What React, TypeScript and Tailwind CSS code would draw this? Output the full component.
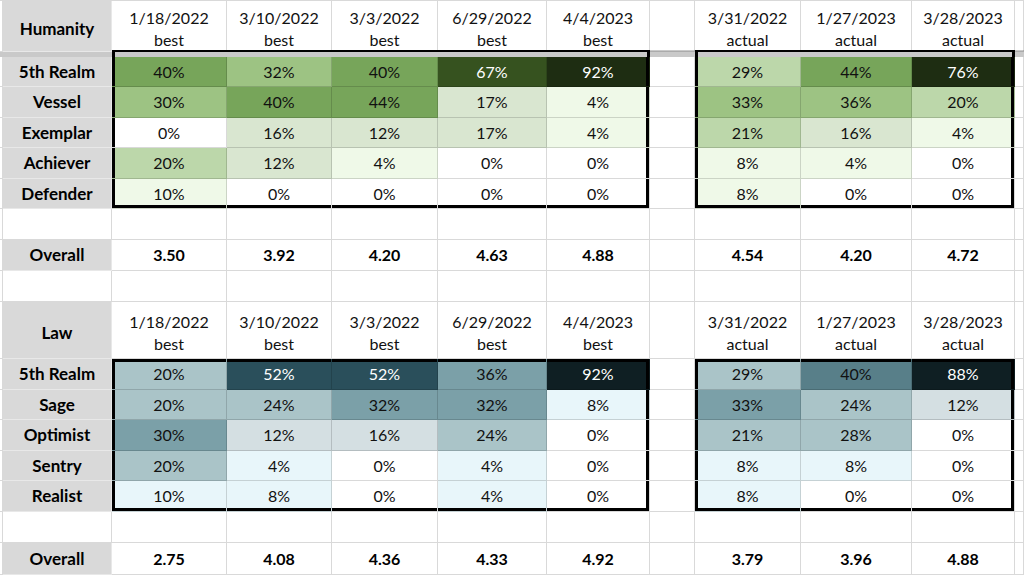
import React from 'react';

// column template shared by every row of the sheet
const GRID =
  'grid grid-cols-[3px_109px_115px_105px_106px_109px_103px_45px_106px_111px_103px_1fr]';
const CELL = 'flex items-center justify-center border-r border-b border-[#00000026]';
const LABEL =
  'flex items-center justify-center border-r border-b border-[#e8e8e8] bg-[#d9d9d9] font-bold text-[17px] text-black';

const bg: Record<string, string> = {
  g5: 'bg-[#1e2d12] text-white',
  g4: 'bg-[#36521f] text-white',
  g3: 'bg-[#77a55a]',
  g2: 'bg-[#9dc383]',
  g1: 'bg-[#bcd7aa]',
  gp: 'bg-[#d9e6d0]',
  g0: 'bg-[#eff9e8]',
  t5: 'bg-[#0f1f23] text-white',
  t4: 'bg-[#2a4f5b] text-white',
  t3b: 'bg-[#587f89]',
  t3: 'bg-[#7ba0a8]',
  t2: 'bg-[#aac4c8]',
  t1: 'bg-[#d4dfe2]',
  t0: 'bg-[#e8f6fa]',
  w: 'bg-white',
};

type Cell = [string, string];
type Line = { label: string; a: Cell[]; b: Cell[] };

const humanity: Line[] = [
  { label: '5th Realm', a: [['40%', 'g3'], ['32%', 'g2'], ['40%', 'g3'], ['67%', 'g4'], ['92%', 'g5']], b: [['29%', 'g1'], ['44%', 'g3'], ['76%', 'g5']] },
  { label: 'Vessel', a: [['30%', 'g2'], ['40%', 'g3'], ['44%', 'g3'], ['17%', 'gp'], ['4%', 'g0']], b: [['33%', 'g2'], ['36%', 'g2'], ['20%', 'g1']] },
  { label: 'Exemplar', a: [['0%', 'w'], ['16%', 'gp'], ['12%', 'gp'], ['17%', 'gp'], ['4%', 'g0']], b: [['21%', 'g1'], ['16%', 'gp'], ['4%', 'g0']] },
  { label: 'Achiever', a: [['20%', 'g1'], ['12%', 'gp'], ['4%', 'g0'], ['0%', 'w'], ['0%', 'w']], b: [['8%', 'g0'], ['4%', 'g0'], ['0%', 'w']] },
  { label: 'Defender', a: [['10%', 'g0'], ['0%', 'w'], ['0%', 'w'], ['0%', 'w'], ['0%', 'w']], b: [['8%', 'g0'], ['0%', 'w'], ['0%', 'w']] },
];

const law: Line[] = [
  { label: '5th Realm', a: [['20%', 't2'], ['52%', 't4'], ['52%', 't4'], ['36%', 't3'], ['92%', 't5']], b: [['29%', 't2'], ['40%', 't3b'], ['88%', 't5']] },
  { label: 'Sage', a: [['20%', 't2'], ['24%', 't2'], ['32%', 't3'], ['32%', 't3'], ['8%', 't0']], b: [['33%', 't3'], ['24%', 't2'], ['12%', 't1']] },
  { label: 'Optimist', a: [['30%', 't3'], ['12%', 't1'], ['16%', 't1'], ['24%', 't2'], ['0%', 'w']], b: [['21%', 't2'], ['28%', 't2'], ['0%', 'w']] },
  { label: 'Sentry', a: [['20%', 't2'], ['4%', 't0'], ['0%', 'w'], ['4%', 't0'], ['0%', 'w']], b: [['8%', 't0'], ['8%', 't0'], ['0%', 'w']] },
  { label: 'Realist', a: [['10%', 't0'], ['8%', 't0'], ['0%', 'w'], ['4%', 't0'], ['0%', 'w']], b: [['8%', 't0'], ['0%', 'w'], ['0%', 'w']] },
];

const heads = ['1/18/2022', '3/10/2022', '3/3/2022', '6/29/2022', '4/4/2023'];
const heads2 = ['3/31/2022', '1/27/2023', '3/28/2023'];

// black frame around each block, drawn with inset shadows on the edge cells
function edge(i: number, n: number, top: boolean, bottom: boolean) {
  const first = i === 0;
  const last = i === n - 1;
  if (top) {
    if (first) return 'shadow-[inset_3px_3px_0_#000]';
    if (last) return 'shadow-[inset_-3px_3px_0_#000]';
    return 'shadow-[inset_0_3px_0_#000]';
  }
  if (bottom) {
    if (first) return 'shadow-[inset_3px_-3px_0_#000]';
    if (last) return 'shadow-[inset_-3px_-3px_0_#000]';
    return 'shadow-[inset_0_-3px_0_#000]';
  }
  if (first) return 'shadow-[inset_3px_0_0_#000]';
  if (last) return 'shadow-[inset_-3px_0_0_#000]';
  return '';
}

function bandEdge(i: number, n: number) {
  if (i === 0) return 'shadow-[inset_3px_2px_0_#000]';
  if (i === n - 1) return 'shadow-[inset_-3px_2px_0_#000]';
  return 'shadow-[inset_0_2px_0_#000]';
}

function Stub() {
  return <div className="border-r border-b border-[#00000026] bg-white" />;
}

function HeadRow({ title, h }: { title: string; h: string }) {
  return (
    <div className={`${GRID} ${h}`}>
      <Stub />
      <div className={`${LABEL} pt-[6px]`}>{title}</div>
      {heads.map((d) => (
        <div key={d} className={`${CELL} flex-col pt-[6px] leading-[22px]`}>
          <span>{d}</span>
          <span>best</span>
        </div>
      ))}
      <div className={CELL} />
      {heads2.map((d) => (
        <div key={d} className={`${CELL} flex-col pt-[6px] leading-[22px]`}>
          <span>{d}</span>
          <span>actual</span>
        </div>
      ))}
      <div className={CELL} />
    </div>
  );
}

function Band() {
  return (
    <div className={`${GRID} h-[7px] bg-[#c9c9c9]`}>
      <div />
      <div />
      {heads.map((d, i) => (
        <div key={d} className={bandEdge(i, 5)} />
      ))}
      <div />
      {heads2.map((d, i) => (
        <div key={d} className={bandEdge(i, 3)} />
      ))}
      <div />
    </div>
  );
}

function DataRow({ line, h, top, bottom }: { line: Line; h: string; top: boolean; bottom: boolean }) {
  return (
    <div className={`${GRID} ${h}`}>
      <Stub />
      <div className={LABEL}>{line.label}</div>
      {line.a.map(([t, k], i) => (
        <div key={i} className={`${CELL} ${bg[k]} ${edge(i, 5, top, bottom)}`}>
          {t}
        </div>
      ))}
      <div className={CELL} />
      {line.b.map(([t, k], i) => (
        <div key={i} className={`${CELL} ${bg[k]} ${edge(i, 3, top, bottom)}`}>
          {t}
        </div>
      ))}
      <div className={CELL} />
    </div>
  );
}

function EmptyRow({ h }: { h: string }) {
  return (
    <div className={`${GRID} ${h}`}>
      {Array.from({ length: 12 }).map((_, i) => (
        <div key={i} className={CELL} />
      ))}
    </div>
  );
}

function OverallRow({ a, b, h }: { a: string[]; b: string[]; h: string }) {
  return (
    <div className={`${GRID} ${h} font-bold text-black`}>
      <Stub />
      <div className={LABEL}>Overall</div>
      {a.map((v, i) => (
        <div key={i} className={CELL}>
          {v}
        </div>
      ))}
      <div className={CELL} />
      {b.map((v, i) => (
        <div key={i} className={CELL}>
          {v}
        </div>
      ))}
      <div className={CELL} />
    </div>
  );
}

const rowH = ['h-[30px]', 'h-[31px]', 'h-[30px]', 'h-[31px]', 'h-[30px]'];
const rowH2 = ['h-[31px]', 'h-[30px]', 'h-[31px]', 'h-[30px]', 'h-[31px]'];

export default function App() {
  return (
    <div className="w-[1024px] h-[576px] overflow-hidden bg-white text-[16px] text-[#111] font-['Lato',sans-serif]">
      <div className="h-[1px] border-b border-[#00000026]" />
      <HeadRow title="Humanity" h="h-[49px]" />
      <Band />
      {humanity.map((l, i) => (
        <DataRow key={l.label} line={l} h={rowH[i]} top={false} bottom={i === 4} />
      ))}
      <EmptyRow h="h-[31px]" />
      <OverallRow h="h-[31px]" a={['3.50', '3.92', '4.20', '4.63', '4.88']} b={['4.54', '4.20', '4.72']} />
      <EmptyRow h="h-[31px]" />
      <HeadRow title="Law" h="h-[57px]" />
      {law.map((l, i) => (
        <DataRow key={l.label} line={l} h={rowH2[i]} top={i === 0} bottom={i === 4} />
      ))}
      <EmptyRow h="h-[31px]" />
      <OverallRow h="h-[32px]" a={['2.75', '4.08', '4.36', '4.33', '4.92']} b={['3.79', '3.96', '4.88']} />
    </div>
  );
}
